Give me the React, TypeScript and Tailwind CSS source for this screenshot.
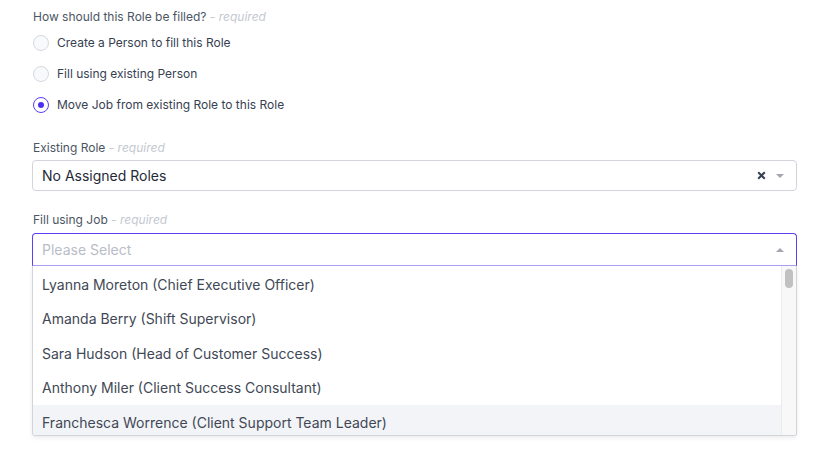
import React from "react";

const font = { fontFamily: "Inter, 'Noto Sans', sans-serif" };

function Label({ text }: { text: string }) {
  return (
    <div className="text-[12px] leading-[16px] text-[#4b5563]">
      {text} <span className="italic text-[#c4c8d0]">- required</span>
    </div>
  );
}

function Radio({ label, checked }: { label: string; checked?: boolean }) {
  return (
    <div className="flex h-[31px] items-center gap-[8px]">
      {checked ? (
        <div className="flex h-[16px] w-[16px] items-center justify-center rounded-full border-[1.5px] border-[#5b3ff6] bg-white">
          <div className="h-[6px] w-[6px] rounded-full bg-[#4a2ff0]" />
        </div>
      ) : (
        <div className="h-[16px] w-[16px] rounded-full border border-[#d5d9e0] bg-[#f8f9fb]" />
      )}
      <span className="text-[12px] text-[#374151]">{label}</span>
    </div>
  );
}

const items = [
  "Lyanna Moreton (Chief Executive Officer)",
  "Amanda Berry (Shift Supervisor)",
  "Sara Hudson (Head of Customer Success)",
  "Anthony Miler (Client Success Consultant)",
  "Franchesca Worrence (Client Support Team Leader)",
];

export default function App() {
  return (
    <div className="h-[464px] w-[839px] bg-white" style={font}>
      <div className="ml-[32px] w-[765px] pt-[9px]">
        <div className="pl-[1px]">
          <Label text="How should this Role be filled?" />
        </div>
        <div className="mt-[2px] pl-[1px]">
          <Radio label="Create a Person to fill this Role" />
          <Radio label="Fill using existing Person" />
          <Radio label="Move Job from existing Role to this Role" checked />
        </div>

        <div className="mt-[20px] pl-[1px]">
          <Label text="Existing Role" />
        </div>
        <div className="mt-[4px] flex h-[31px] items-center rounded-[4px] border border-[#d1d5db] pl-[9px] pr-[12px]">
          <span className="flex-1 text-[14px] text-[#1f2937]">No Assigned Roles</span>
          <svg width="9" height="9" viewBox="0 0 9 9" className="mr-[10px]">
            <path d="M1.2 1.2 L7.8 7.8 M7.8 1.2 L1.2 7.8" stroke="#374151" strokeWidth="2" />
          </svg>
          <svg width="8" height="4" viewBox="0 0 8 4">
            <path d="M0 0 L8 0 L4 4 Z" fill="#a3a7af" />
          </svg>
        </div>

        <div className="mt-[21px] pl-[1px]">
          <Label text="Fill using Job" />
        </div>
        <div className="mt-[5px] flex h-[33px] items-center rounded-t-[4px] border border-[#5a3ff5] border-b-[#aaa1f2] pl-[9px] pr-[12px]">
          <span className="flex-1 text-[14px] text-[#b9bdc7]">Please Select</span>
          <svg width="8" height="4" viewBox="0 0 8 4">
            <path d="M0 4 L8 4 L4 0 Z" fill="#a3a7af" />
          </svg>
        </div>
        <div className="flex h-[170px] overflow-hidden rounded-b-[3px] border border-t-0 border-[#d1d5db] shadow-[0_2px_4px_rgba(0,0,0,0.08)]">
          <div className="flex flex-1 flex-col overflow-hidden pt-[1px]">
            {items.map((t, i) => (
              <div
                key={t}
                className={`flex shrink-0 items-center pl-[9px] text-[14px] text-[#414855] ${
                  i === 4 ? "h-[31px] bg-[#f3f4f8] pt-[3px]" : "h-[34.5px] bg-white"
                }`}
              >
                {t}
              </div>
            ))}
          </div>
          <div className="flex w-[15px] shrink-0 justify-center border-l border-[#ececec] bg-[#f8f8f8] pt-[3px]">
            <div className="h-[19px] w-[8px] rounded-full bg-[#c1c1c1]" />
          </div>
        </div>
      </div>
    </div>
  );
}
